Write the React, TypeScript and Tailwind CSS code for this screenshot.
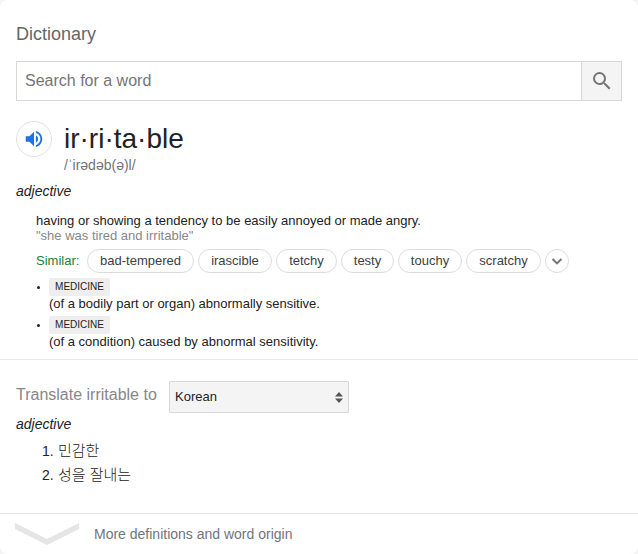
const similar = [
  { word: "bad-tempered", width: "w-[107px]" },
  { word: "irascible", width: "w-[74px]" },
  { word: "tetchy", width: "w-[61px]" },
  { word: "testy", width: "w-[53px]" },
  { word: "touchy", width: "w-[64px]" },
  { word: "scratchy", width: "w-[75px]" },
];

const medical = [
  "(of a bodily part or organ) abnormally sensitive.",
  "(of a condition) caused by abnormal sensitivity.",
];

const translations = ["민감한", "성을 잘내는"];

function SearchBox() {
  return (
    <div className="mx-4 mt-[15px] flex h-10 border border-[#d8d8d8]">
      <input
        className="min-w-0 flex-1 bg-white px-2 text-[16px] text-[#666] outline-none placeholder:text-[#757575]"
        placeholder="Search for a word"
      />
      <button className="flex w-10 items-center justify-center border-l border-[#d8d8d8] bg-[#f4f4f4]" aria-label="Search">
        <svg className="h-6 w-6 fill-[#757575]" viewBox="0 0 24 24">
          <path d="M15.5 14h-.79l-.28-.27A6.47 6.47 0 0 0 16 9.5 6.5 6.5 0 1 0 9.5 16c1.61 0 3.09-.59 4.23-1.57l.27.28v.79l5 4.99L20.49 19l-4.99-5zm-6 0C7.01 14 5 11.99 5 9.5S7.01 5 9.5 5 14 7.01 14 9.5 11.99 14 9.5 14z" />
        </svg>
      </button>
    </div>
  );
}

function Headword() {
  return (
    <div className="mx-4 mt-5 flex h-[54px]">
      <button className="flex h-9 w-9 items-center justify-center rounded-full border border-[#dfe1e5]" aria-label="Listen">
        <svg className="h-[22px] w-[22px] fill-[#1a73e8]" viewBox="0 0 24 24">
          <path d="M3 9v6h4l5 5V4L7 9H3zm13.5 3A4.5 4.5 0 0 0 14 7.97v8.05A4.49 4.49 0 0 0 16.5 12zM14 3.23v2.06c2.89.86 5 3.54 5 6.71s-2.11 5.85-5 6.71v2.06c4.01-.91 7-4.49 7-8.77s-2.99-7.86-7-8.77z" />
        </svg>
      </button>
      <div className="ml-3">
        <h1 className="text-[28px] leading-9 text-[#222]">ir·ri·ta·ble</h1>
        <p className="-mt-px text-[14px] leading-[18px] text-[#70757a]">/ˈirədəb(ə)l/</p>
      </div>
    </div>
  );
}

function Definitions() {
  return (
    <div className="ml-9 mt-[13px] text-[13px] leading-[15px] text-[#222]">
      <p>having or showing a tendency to be easily annoyed or made angry.</p>
      <p className="text-[#878787]">"she was tired and irritable"</p>
      <div className="mt-[6px] flex h-6 items-center">
        <span className="w-[51px] pb-[2px] text-[#188038]">Similar:</span>
        <div className="flex gap-1">
          {similar.map(({ word, width }) => (
            <span key={word} className={`${width} flex h-6 items-center justify-center rounded-full border border-[#dadce0] pb-[2px] text-[#3c4043]`}>
              {word}
            </span>
          ))}
          <button className="flex h-6 w-6 items-center justify-center rounded-full border border-[#dadce0]" aria-label="More">
            <svg className="h-4 w-4 fill-[#70757a]" viewBox="0 0 24 24">
              <path d="M12 17.7 4.3 10l2.1-2.1 5.6 5.6 5.6-5.6 2.1 2.1z" />
            </svg>
          </button>
        </div>
      </div>
      <ul className="mt-1">
        {medical.map((text) => (
          <li key={text} className="flex h-[38px]">
            <span className="ml-px mt-[9px] h-[3px] w-[3px] rounded-full bg-[#222]" />
            <div className="ml-[9px]">
              <span className="mt-px flex h-[18px] w-[61px] items-center justify-center rounded-[2px] bg-[#eee] text-[10px] leading-none">
                MEDICINE
              </span>
              <p>{text}</p>
            </div>
          </li>
        ))}
      </ul>
    </div>
  );
}

function Translate() {
  return (
    <section className="h-[154px] border-t border-[#e8e8e8] px-4 pt-[21px] text-[#222]">
      <div className="flex h-8">
        <span className="w-[153px] text-[16px] leading-[27px] text-[#878787]">Translate irritable to</span>
        <button className="flex w-[180px] items-center justify-between rounded-[1px] border border-[#d8d8d8] bg-[#f4f4f4] pl-[5px] pr-[5px] text-[13px]">
          <span>Korean</span>
          <svg className="h-[11px] w-2 fill-[#555]" viewBox="0 0 8 11">
            <path d="M0 4.5 4 0l4 4.5zM0 6.5h8L4 11z" />
          </svg>
        </button>
      </div>
      <p className="mt-[2px] text-[14px] italic leading-[18px]">adjective</p>
      <ol className="ml-[26px] mt-[6px] text-[14px] leading-6">
        {translations.map((text, index) => (
          <li key={text} className="flex h-6">
            <span className="w-4">{index + 1}.</span>
            <span className="font-['Liberation_Sans','Noto_Sans_CJK_KR',sans-serif] text-[15px] font-light">{text}</span>
          </li>
        ))}
      </ol>
    </section>
  );
}

export default function App() {
  return (
    <main className="h-[554px] w-[638px] overflow-hidden bg-[#f4f4f4] font-['Liberation_Sans',Arial,sans-serif]">
      <div className="h-full rounded-lg bg-white">
        <div className="h-[359px] pt-[22px]">
          <h2 className="ml-4 text-[18px] leading-6 text-[#666]">Dictionary</h2>
          <SearchBox />
          <Headword />
          <p className="ml-4 mt-[7px] text-[14px] italic leading-[18px] text-[#222]">adjective</p>
          <Definitions />
        </div>
        <Translate />
        <footer className="flex h-[41px] items-center border-t border-[#e8e8e8] pl-[15px] text-[14px] text-[#70757a]">
          <svg className="h-[22px] w-16 fill-[#e5e5e5]" viewBox="0 0 64 22">
            <path d="M0 0 32 16 64 0v6L32 22 0 6z" />
          </svg>
          <span className="ml-[15px]">More definitions and word origin</span>
        </footer>
      </div>
    </main>
  );
}
